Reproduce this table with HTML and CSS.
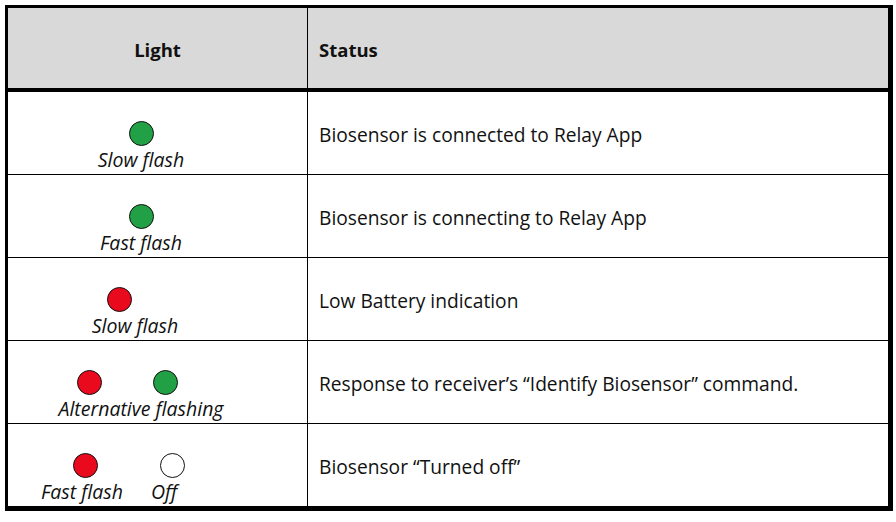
FILE: index.html
```html
<!DOCTYPE html>
<html>
<head>
<meta charset="utf-8">
<link rel="stylesheet" href="styles.css">
</head>
<body>
<div class="table">
  <div class="row head">
    <div class="cell light-h">Light</div>
    <div class="cell status-h">Status</div>
  </div>
  <div class="row">
    <div class="cell light">
      <div class="leds"><span class="led green"></span></div>
      <div class="label">Slow flash</div>
    </div>
    <div class="cell status">Biosensor is connected to Relay App</div>
  </div>
  <div class="row">
    <div class="cell light">
      <div class="leds"><span class="led green"></span></div>
      <div class="label">Fast flash</div>
    </div>
    <div class="cell status">Biosensor is connecting to Relay App</div>
  </div>
  <div class="row">
    <div class="cell light">
      <div class="leds shift"><span class="led red"></span></div>
      <div class="label lowbat">Slow flash</div>
    </div>
    <div class="cell status">Low Battery indication</div>
  </div>
  <div class="row">
    <div class="cell light">
      <div class="leds pair"><span class="led red"></span><span class="led green"></span></div>
      <div class="label">Alternative flashing</div>
    </div>
    <div class="cell status">Response to receiver’s “Identify Biosensor” command.</div>
  </div>
  <div class="row last">
    <div class="cell light off-row">
      <div class="leds duo"><span class="led red"></span><span class="led white"></span></div>
      <div class="labels">
        <span class="label first">Fast flash</span><span class="label">Off</span>
      </div>
    </div>
    <div class="cell status">Biosensor “Turned off”</div>
  </div>
</div>
</body>
</html>
```
FILE: styles.css
```css
* { box-sizing: border-box; }
html, body { margin: 0; padding: 0; background: #fff; }
body { width: 896px; height: 522px; padding: 5px 4px 0 5px; font-family: "Open Sans", "DejaVu Sans", sans-serif; color: #111; }
.table { width: 888px; border: 3px solid #000; border-right-width: 5px; border-bottom-width: 5px; }
.row { display: grid; grid-template-columns: 299px 1fr; height: 83px; border-bottom: 1px solid #000; }
.row.last { border-bottom: none; height: 82px; }
.row.head { height: 84px; background: #d9d9d9; border-bottom: 4px solid #000; }
.cell { display: flex; align-items: center; }
.cell + .cell { border-left: 1px solid #000; }
.light-h { justify-content: center; font-weight: 700; font-size: 18.5px; padding-top: 2px; }
.status-h { padding-left: 11px; font-weight: 700; font-size: 18.5px; padding-top: 2px; }
.status { padding-left: 11px; font-size: 19.2px; padding-top: 2px; }
.light { flex-direction: column; justify-content: flex-start; align-items: center; padding-right: 33px; padding-top: 29px; }
.leds { display: flex; justify-content: center; gap: 51px; }
.leds.shift { margin-right: 43px; }
.leds.pair { margin-right: 27px; }
.led { width: 25px; height: 25px; border-radius: 50%; border: 1.5px solid #111; display: block; }
.green { background: #22a045; }
.red { background: #ea0a1e; }
.white { background: #fff; }
.label { font-style: italic; font-size: 19.5px; line-height: 24px; margin-top: 2px; white-space: nowrap; }
.label.lowbat { margin-right: 12px; }
.off-row { align-items: flex-start; padding-left: 0; padding-right: 0; }
.leds.duo { gap: 62px; padding-left: 65px; justify-content: flex-start; }
.labels { display: flex; padding-left: 33px; margin-top: 2px; }
.labels .label { margin-top: 0; }
.labels .first { width: 110px; }
```
